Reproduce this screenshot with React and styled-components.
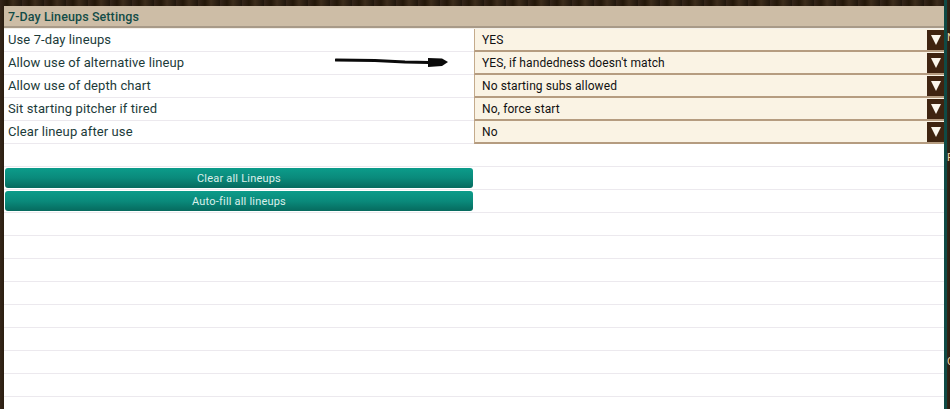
import React from 'react';
import styled, { createGlobalStyle } from 'styled-components';

const GlobalStyle = createGlobalStyle`
  html, body {
    margin: 0;
    padding: 0;
    background: #2b1c10;
  }
`;

const settings = [
  { label: 'Use 7-day lineups', value: 'YES' },
  { label: 'Allow use of alternative lineup', value: "YES, if handedness doesn't match", arrow: true },
  { label: 'Allow use of depth chart', value: 'No starting subs allowed' },
  { label: 'Sit starting pitcher if tired', value: 'No, force start' },
  { label: 'Clear lineup after use', value: 'No' },
];

const SideTabs = () => (
  <SideStrip>
    <SideLetter $top={32}>N</SideLetter>
    <SideLetter $top={152}>F</SideLetter>
    <SideLetter $top={356}>O</SideLetter>
  </SideStrip>
);

const MarkerArrow = () => (
  <ArrowSvg width="114" height="12" viewBox="0 0 114 12" aria-hidden="true">
    <path d="M1 3 L40 3.5 L70 5 L94 5.5" stroke="#0a0a0a" strokeWidth="3.2" fill="none" strokeLinecap="round" />
    <path d="M93 1 L107 1.5 L113 5 L107 9 L93 10 Z" fill="#0a0a0a" />
  </ArrowSvg>
);

const App = () => {
  return (
    <Page>
      <GlobalStyle />
      <Panel>
        <Header>7-Day Lineups Settings</Header>
        {settings.map((item) => (
          <Row key={item.label}>
            <Label>
              {item.label}
              {item.arrow && <MarkerArrow />}
            </Label>
            <Select>
              <SelectValue>{item.value}</SelectValue>
              <SelectButton>
                <Triangle />
              </SelectButton>
            </Select>
          </Row>
        ))}
        <Row />
        <Row>
          <ButtonCell>
            <ActionButton type="button">Clear all Lineups</ActionButton>
          </ButtonCell>
        </Row>
        <Row>
          <ButtonCell>
            <ActionButton type="button">Auto-fill all lineups</ActionButton>
          </ButtonCell>
        </Row>
        {Array.from({ length: 9 }).map((_, i) => (
          <Row key={i} />
        ))}
      </Panel>
      <SideTabs />
    </Page>
  );
};

export default App;

const Page = styled.div`
  width: 950px;
  height: 409px;
  overflow: hidden;
  display: flex;
  align-items: flex-start;
  padding: 6px 0 0 4px;
  box-sizing: border-box;
  position: relative;
  font-family: 'Roboto', 'Liberation Sans', sans-serif;
  background: repeating-linear-gradient(90deg, #35261a 0, #231709 7px, #3d2d1c 13px, #21170d 22px);
`;

const Panel = styled.div`
  width: 940px;
  flex: none;
  background: #ffffff;
`;

const Header = styled.div`
  height: 20px;
  padding-left: 4px;
  display: flex;
  align-items: center;
  background: #cdbda6;
  border-bottom: 2px solid #a89a88;
  box-shadow: 0 1px 0 #f3efe8;
  margin-bottom: 1px;
  color: #124c47;
  font-size: 12.5px;
  font-weight: 500;
  letter-spacing: 0.1px;
`;

const Row = styled.div`
  height: 22px;
  display: flex;
  align-items: stretch;
  border-bottom: 1px solid #ece9ee;
  background: #ffffff;
`;

const Label = styled.div`
  width: 470px;
  flex: none;
  padding: 0 0 2px 4px;
  box-sizing: border-box;
  display: flex;
  align-items: center;
  position: relative;
  color: #1c3b3a;
  font-size: 13px;
  letter-spacing: 0.1px;
`;

const ArrowSvg = styled.svg`
  position: absolute;
  left: 331px;
  top: 5px;
`;

const Select = styled.div`
  flex: 1;
  display: flex;
  height: 23px;
  box-sizing: border-box;
  border-left: 1px solid #c4ab8c;
  border-bottom: 2px solid #b59c80;
  background: #faf3e4;
`;

const SelectValue = styled.div`
  flex: 1;
  padding-left: 7px;
  display: flex;
  align-items: center;
  color: #111111;
  font-size: 12px;
  letter-spacing: 0.1px;
`;

const SelectButton = styled.div`
  width: 17px;
  flex: none;
  margin-top: 1px;
  display: flex;
  align-items: center;
  justify-content: center;
  background: #3f2410;
`;

const Triangle = styled.div`
  width: 0;
  height: 0;
  border-left: 5px solid transparent;
  border-right: 5px solid transparent;
  border-top: 10px solid #fbf6ec;
`;

const ButtonCell = styled.div`
  width: 470px;
  flex: none;
  box-sizing: border-box;
  padding: 1px 1px 0 1px;
  display: flex;
`;

const ActionButton = styled.button`
  flex: 1;
  height: 20px;
  padding: 0;
  border: none;
  border-radius: 3px;
  background: linear-gradient(180deg, #0c9c8a 0%, #0a8a7b 50%, #066a5e 100%);
  color: #dcefeb;
  font-family: inherit;
  font-size: 11px;
  letter-spacing: 0.2px;
`;

const SideStrip = styled.div`
  width: 3px;
  height: 409px;
  flex: none;
  margin-top: -6px;
  background: #0f4a45;
  position: relative;
`;

const SideLetter = styled.span`
  position: absolute;
  left: 3px;
  top: ${(props) => props.$top}px;
  color: #f3d9a8;
  font-size: 11px;
  line-height: 12px;
`;
